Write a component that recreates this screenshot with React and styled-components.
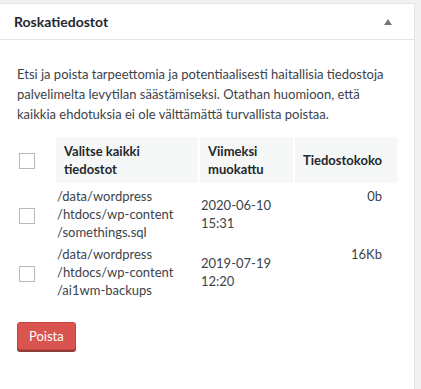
import React from 'react';
import styled, { createGlobalStyle } from 'styled-components';

const Global = createGlobalStyle`
  body {
    margin: 0;
    background: #f1f1f1;
    font-family: "Lato", "Noto Sans", sans-serif;
    color: #3c434a;
  }
`;

const Panel = styled.div`
  box-sizing: border-box;
  width: 416px;
  margin: 3px 0 0 -1px;
  height: 400px;
  background: #fff;
  border: 1px solid #e2e4e7;
`;

const Head = styled.div`
  display: flex;
  align-items: center;
  justify-content: space-between;
  height: 35px;
  padding: 0 22px 0 14px;
  border-bottom: 1px solid #e2e4e7;
`;

const Title = styled.h2`
  margin: 0;
  font-size: 14px;
  font-weight: 700;
  color: #23282d;
`;

const Arrow = styled.span`
  width: 0;
  height: 0;
  border-left: 4px solid transparent;
  border-right: 4px solid transparent;
  border-bottom: 6px solid #72777c;
`;

const Inside = styled.div`
  padding: 12px 12px 0 17px;
`;

const Intro = styled.p`
  max-width: 374px;
  margin: 12px 0 11px;
  font-size: 13px;
  line-height: 20px;
`;

const Table = styled.table`
  border-spacing: 2px;
  margin-left: -3px;
  font-size: 13px;
  line-height: 18px;
`;

const Th = styled.th`
  box-sizing: border-box;
  width: ${p => p.w}px;
  padding: ${p => (p.plain ? '0 0 0 3px' : '5px 8px')};
  text-align: left;
  font-weight: 700;
  color: #23282d;
  background: ${p => (p.plain ? 'transparent' : '#f6f7f7')};
`;

const Td = styled.td`
  padding: ${p => (p.right ? '2px 15px 0 1px' : p.check ? '2px 0 0 3px' : '2px 1px 0')};
  text-align: ${p => (p.right ? 'right' : 'left')};
  vertical-align: ${p => p.va || 'middle'};
`;

const Box = styled.span`
  display: block;
  width: 16px;
  height: 16px;
  margin-top: ${p => p.mt || 0}px;
  box-sizing: border-box;
  border: 1px solid #b4b9be;
  background: #fff;
`;

const Button = styled.button`
  margin-top: 21px;
  height: 28px;
  padding: 0 11px;
  font: inherit;
  font-size: 13px;
  color: #fff;
  background: #d9534f;
  border: 1px solid #c9433f;
  border-radius: 3px;
  box-shadow: 0 2px 0 #8e3b38;
`;

const rows = [
  { path: ['/data/wordpress', '/htdocs/wp-content', '/somethings.sql'], date: ['2020-06-10', '15:31'], size: '0b' },
  { path: ['/data/wordpress', '/htdocs/wp-content', '/ai1wm-backups'], date: ['2019-07-19', '12:20'], size: '16Kb' },
];

const Lines = ({ items }) => items.map((t, i) => <React.Fragment key={i}>{i > 0 && <br />}{t}</React.Fragment>);

export default function App() {
  return (
    <>
      <Global />
      <Panel>
        <Head>
          <Title>Roskatiedostot</Title>
          <Arrow />
        </Head>
        <Inside>
          <Intro>
            Etsi ja poista tarpeettomia ja potentiaalisesti haitallisia tiedostoja palvelimelta levytilan säästämiseksi. Otathan huomioon, että kaikkia ehdotuksia ei ole välttämättä turvallista poistaa.
          </Intro>
          <Table>
            <thead>
              <tr>
                <Th plain w={38}><Box mt={1} /></Th>
                <Th w={142}><Lines items={['Valitse kaikki', 'tiedostot']} /></Th>
                <Th w={93}><Lines items={['Viimeksi', 'muokattu']} /></Th>
                <Th w={102}>Tiedostokoko</Th>
              </tr>
            </thead>
            <tbody>
              {rows.map((r, i) => (
                <tr key={i}>
                  <Td check><Box mt={4} /></Td>
                  <Td><Lines items={r.path} /></Td>
                  <Td><Lines items={r.date} /></Td>
                  <Td right va="top">{r.size}</Td>
                </tr>
              ))}
            </tbody>
          </Table>
          <Button>Poista</Button>
        </Inside>
      </Panel>
    </>
  );
}
